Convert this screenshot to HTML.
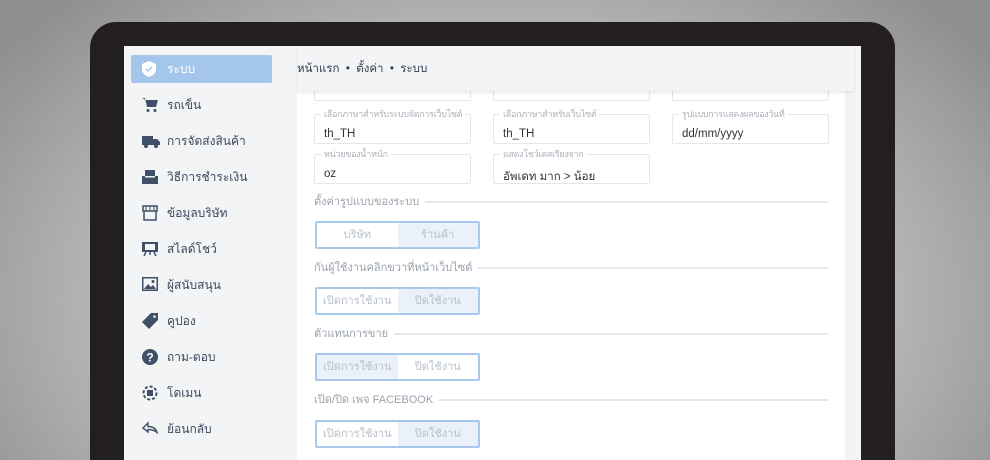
<!DOCTYPE html>
<html style="overflow:hidden;width:990px;height:460px"><head><meta charset="utf-8"><style>
*{margin:0;padding:0;box-sizing:border-box}
body{width:990px;height:460px;overflow:hidden;position:relative;font-family:"Liberation Sans","Noto Sans CJK SC",sans-serif;background:radial-gradient(ellipse 620px 420px at 495px 300px,#d9d9d9 0%,#c4c4c4 50%,#8e8e8e 100%)}
.bezel{position:absolute;left:90px;top:22px;width:805px;height:438px;background:#231f20;border-radius:26px 26px 0 0}
.screen{position:absolute;left:124px;top:46px;width:737px;height:414px;background:#f3f4f6;overflow:hidden}
.side{position:absolute;left:0;top:0;width:173px;height:414px;background:#f3f4f6}
.item{position:absolute;left:7px;width:141px;height:28px;font-size:12px;color:#3a4a5e;line-height:28px;padding-left:36px;white-space:nowrap}
.item.act{background:#a4c6ea;border-radius:2px;color:#fff}
.item svg{position:absolute;left:11px;top:6px}
.main{position:absolute;left:173px;top:0;width:548px;height:414px;background:#fff}
.head{position:absolute;left:173px;top:0;width:557px;height:45px;background:#f3f4f6;box-shadow:0 2px 3px rgba(0,0,0,.08);font-size:11.5px;color:#2f3e52;line-height:46px;z-index:2;white-space:nowrap}
.fld{position:absolute;width:157px;height:30px;border:1.5px solid #e3e6ea;border-radius:2px;font-size:11.5px;color:#333;padding:13px 0 0 9px;white-space:nowrap}
.fld span{position:absolute;top:-7px;left:6px;background:#fff;font-size:9px;color:#aab1ba;padding:0 3px;line-height:12px;white-space:nowrap;letter-spacing:-0.3px}
.sec{position:absolute;left:190px;width:514px;font-size:11px;color:#9aa2ac;line-height:14px;display:flex;align-items:center;white-space:nowrap}
.sec:after{content:"";flex:1;height:1.5px;background:#e6e8eb;margin-left:6px}
.tg{position:absolute;left:191px;width:165px;height:28px;border:2px solid #a9c8ee;border-radius:2px;display:flex;font-size:11px;color:#b7bfc9}
.tg div{flex:1;text-align:center;line-height:24px;white-space:nowrap}
.tg .on{background:#eaf1fa}
</style></head><body>
<div class="bezel"></div>
<div class="screen">
 <div class="side">
  <div class="item act" style="top:9px"><svg width="14" height="16" viewBox="0 0 14 16"><path d="M7 0L0 3v5c0 4 3 7 7 8 4-1 7-4 7-8V3z" fill="#fff"/><path d="M4 8l2 2 4-4" stroke="#a4c6ea" stroke-width="1.5" fill="none"/></svg>ระบบ</div>
  <div class="item" style="top:45px"><svg width="16" height="16" viewBox="0 0 16 16"><path d="M0 1h3l2 9h9l2-7H4" fill="#3f5068"/><circle cx="6" cy="13.5" r="1.5" fill="#3f5068"/><circle cx="13" cy="13.5" r="1.5" fill="#3f5068"/></svg>รถเข็น</div>
  <div class="item" style="top:81px"><svg width="18" height="16" viewBox="0 0 18 16"><rect x="0" y="3" width="11" height="9" fill="#3f5068"/><path d="M11 6h4l3 3v3h-7z" fill="#3f5068"/><circle cx="4" cy="13" r="2" fill="#3f5068"/><circle cx="14" cy="13" r="2" fill="#3f5068"/></svg>การจัดส่งสินค้า</div>
  <div class="item" style="top:117px"><svg width="16" height="16" viewBox="0 0 16 16"><rect x="3" y="1" width="10" height="7" fill="#3f5068"/><rect x="0" y="7" width="16" height="8" fill="#3f5068"/><rect x="3" y="7" width="10" height="1.5" fill="#f3f4f6"/></svg>วิธีการชำระเงิน</div>
  <div class="item" style="top:153px"><svg width="16" height="16" viewBox="0 0 16 16"><path d="M1 1h14v5H1zM2 6h12v9H2z" fill="none" stroke="#3f5068" stroke-width="1.5"/><path d="M4 1v5M8 1v5M12 1v5" stroke="#3f5068"/></svg>ข้อมูลบริษัท</div>
  <div class="item" style="top:189px"><svg width="16" height="16" viewBox="0 0 16 16"><rect x="0" y="1" width="16" height="10" fill="#3f5068"/><rect x="3" y="3" width="10" height="6" fill="#f3f4f6"/><path d="M4 11l-2 4M12 11l2 4M8 11v3" stroke="#3f5068" stroke-width="1.5"/></svg>สไลด์โชว์</div>
  <div class="item" style="top:225px"><svg width="16" height="14" viewBox="0 0 16 14"><rect x="0" y="0" width="16" height="14" fill="#3f5068"/><rect x="1.5" y="1.5" width="13" height="11" fill="#f3f4f6"/><path d="M2 12l4-5 3 3 2-2 3 4z" fill="#3f5068"/><circle cx="11" cy="4.5" r="1.5" fill="#3f5068"/></svg>ผู้สนับสนุน</div>
  <div class="item" style="top:261px"><svg width="16" height="16" viewBox="0 0 16 16"><path d="M9 0h7v7l-9 9-7-7z" fill="#3f5068"/><circle cx="12.5" cy="3.5" r="1.3" fill="#f3f4f6"/></svg>คูปอง</div>
  <div class="item" style="top:297px"><svg width="16" height="16" viewBox="0 0 16 16"><circle cx="8" cy="8" r="8" fill="#3f5068"/><text x="8" y="12.5" font-size="12" font-weight="bold" fill="#fff" text-anchor="middle" font-family="Liberation Sans">?</text></svg>ถาม-ตอบ</div>
  <div class="item" style="top:333px"><svg width="16" height="16" viewBox="0 0 16 16"><circle cx="8" cy="8" r="6.5" fill="none" stroke="#3f5068" stroke-width="2" stroke-dasharray="3 2"/><rect x="5" y="5" width="6" height="6" fill="#3f5068"/></svg>โดเมน</div>
  <div class="item" style="top:369px"><svg width="16" height="14" viewBox="0 0 16 14"><path d="M6 2L1 7l5 4V8.5c4 0 7 1 9 3-1-4-4-6-9-6z" fill="none" stroke="#3f5068" stroke-width="1.4"/></svg>ย้อนกลับ</div>
 </div>
 <div class="main">
  <div class="fld" style="left:17px;top:25px"></div>
  <div class="fld" style="left:196px;top:25px"></div>
  <div class="fld" style="left:375px;top:25px"></div>
  <div class="fld" style="left:17px;top:68px"><span>เลือกภาษาสำหรับระบบจัดการเว็บไซต์</span>th_TH</div>
  <div class="fld" style="left:196px;top:68px"><span>เลือกภาษาสำหรับเว็บไซต์</span>th_TH</div>
  <div class="fld" style="left:375px;top:68px"><span>รูปแบบการแสดงผลของวันที่</span>dd/mm/yyyy</div>
  <div class="fld" style="left:17px;top:108px"><span>หน่วยของน้ำหนัก</span>oz</div>
  <div class="fld" style="left:196px;top:108px"><span>แสดงโชว์เคสเรียงจาก</span>อัพเดท มาก &gt; น้อย</div>
 </div>
 <div class="head"><span style="position:absolute;left:0">หน้าแรก &nbsp;•&nbsp; ตั้งค่า &nbsp;•&nbsp; ระบบ</span></div>
 <div class="sec" style="top:149px">ตั้งค่ารูปแบบของระบบ</div>
 <div class="tg" style="top:175px"><div>บริษัท</div><div class="on">ร้านค้า</div></div>
 <div class="sec" style="top:215px">กันผู้ใช้งานคลิกขวาที่หน้าเว็บไซต์</div>
 <div class="tg" style="top:241px"><div>เปิดการใช้งาน</div><div class="on">ปิดใช้งาน</div></div>
 <div class="sec" style="top:281px">ตัวแทนการขาย</div>
 <div class="tg" style="top:307px"><div class="on">เปิดการใช้งาน</div><div>ปิดใช้งาน</div></div>
 <div class="sec" style="top:347px">เปิด/ปิด เพจ FACEBOOK</div>
 <div class="tg" style="top:374px"><div>เปิดการใช้งาน</div><div class="on">ปิดใช้งาน</div></div>
</div>
</body></html>
